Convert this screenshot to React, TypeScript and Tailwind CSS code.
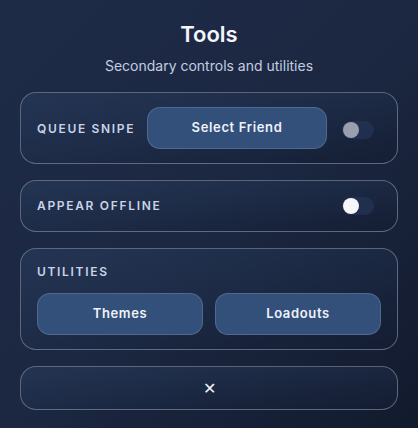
import React, { useState } from 'react';

// Panel de herramientas secundarias
const Toggle: React.FC<{ on: boolean; onChange: () => void }> = ({ on, onChange }) => (
  <button
    onClick={onChange}
    className="relative w-[32px] h-[18px] rounded-full bg-[#26375a]/60 shrink-0"
    aria-pressed={on}
  >
    <span
      className={`absolute top-[1px] left-[1px] w-[16px] h-[16px] rounded-full ${
        on ? 'bg-[#f5f7fb]' : 'bg-[#9a9fae]'
      }`}
    />
  </button>
);

const Card: React.FC<{ children: React.ReactNode; className?: string }> = ({ children, className = '' }) => (
  <div
    className={`rounded-2xl border border-[#8592a8]/60 bg-gradient-to-br from-[#273a5a]/70 via-[#1f2e4a]/60 to-[#141d32]/80 ${className}`}
  >
    {children}
  </div>
);

const labelCls = 'text-[12px] font-semibold tracking-[0.14em] text-[#c9d4e6]';
const btnCls =
  'h-[42px] rounded-[13px] border border-[#6c82a6]/50 bg-[#33507a] text-[13px] font-semibold tracking-[0.05em] text-[#eef2f8]';

export default function App() {
  const [snipe, setSnipe] = useState(false);
  const [offline, setOffline] = useState(true);

  return (
    <div
      className="w-[418px] h-[428px] overflow-hidden bg-gradient-to-br from-[#1e2b47] via-[#1c2842] to-[#121a2d] px-5 pt-5"
      style={{ fontFamily: 'Inter, "Noto Sans", sans-serif' }}
    >
      <h1 className="text-center text-[22px] leading-[28px] font-semibold text-[#f3f5f9]">Tools</h1>
      <p className="mt-2 text-center text-[14px] leading-[20px] text-[#c3cde0]">Secondary controls and utilities</p>

      <div className="mt-[16px] flex flex-col gap-[16px]">
        <Card className="flex items-center pl-4 pr-[23px] py-[14px]">
          <span className={`${labelCls} w-[110px] shrink-0 mt-[1px]`}>QUEUE SNIPE</span>
          <button className={`${btnCls} w-[180px]`}>Select Friend</button>
          <div className="ml-auto flex mt-[4px]">
            <Toggle on={snipe} onChange={() => setSnipe(!snipe)} />
          </div>
        </Card>

        <Card className="flex items-center justify-between pl-4 pr-[23px] h-[52px]">
          <span className={labelCls}>APPEAR OFFLINE</span>
          <Toggle on={offline} onChange={() => setOffline(!offline)} />
        </Card>

        <Card className="px-4 pt-[14px] pb-[14px]">
          <div className={`${labelCls} leading-[18px]`}>UTILITIES</div>
          <div className="mt-[12px] grid grid-cols-2 gap-3">
            <button className={btnCls}>Themes</button>
            <button className={btnCls}>Loadouts</button>
          </div>
        </Card>

        <Card className="h-[44px] flex items-center justify-center">
          <span className="text-[16px] leading-none text-[#f3f5f9]">✕</span>
        </Card>
      </div>
    </div>
  );
}
